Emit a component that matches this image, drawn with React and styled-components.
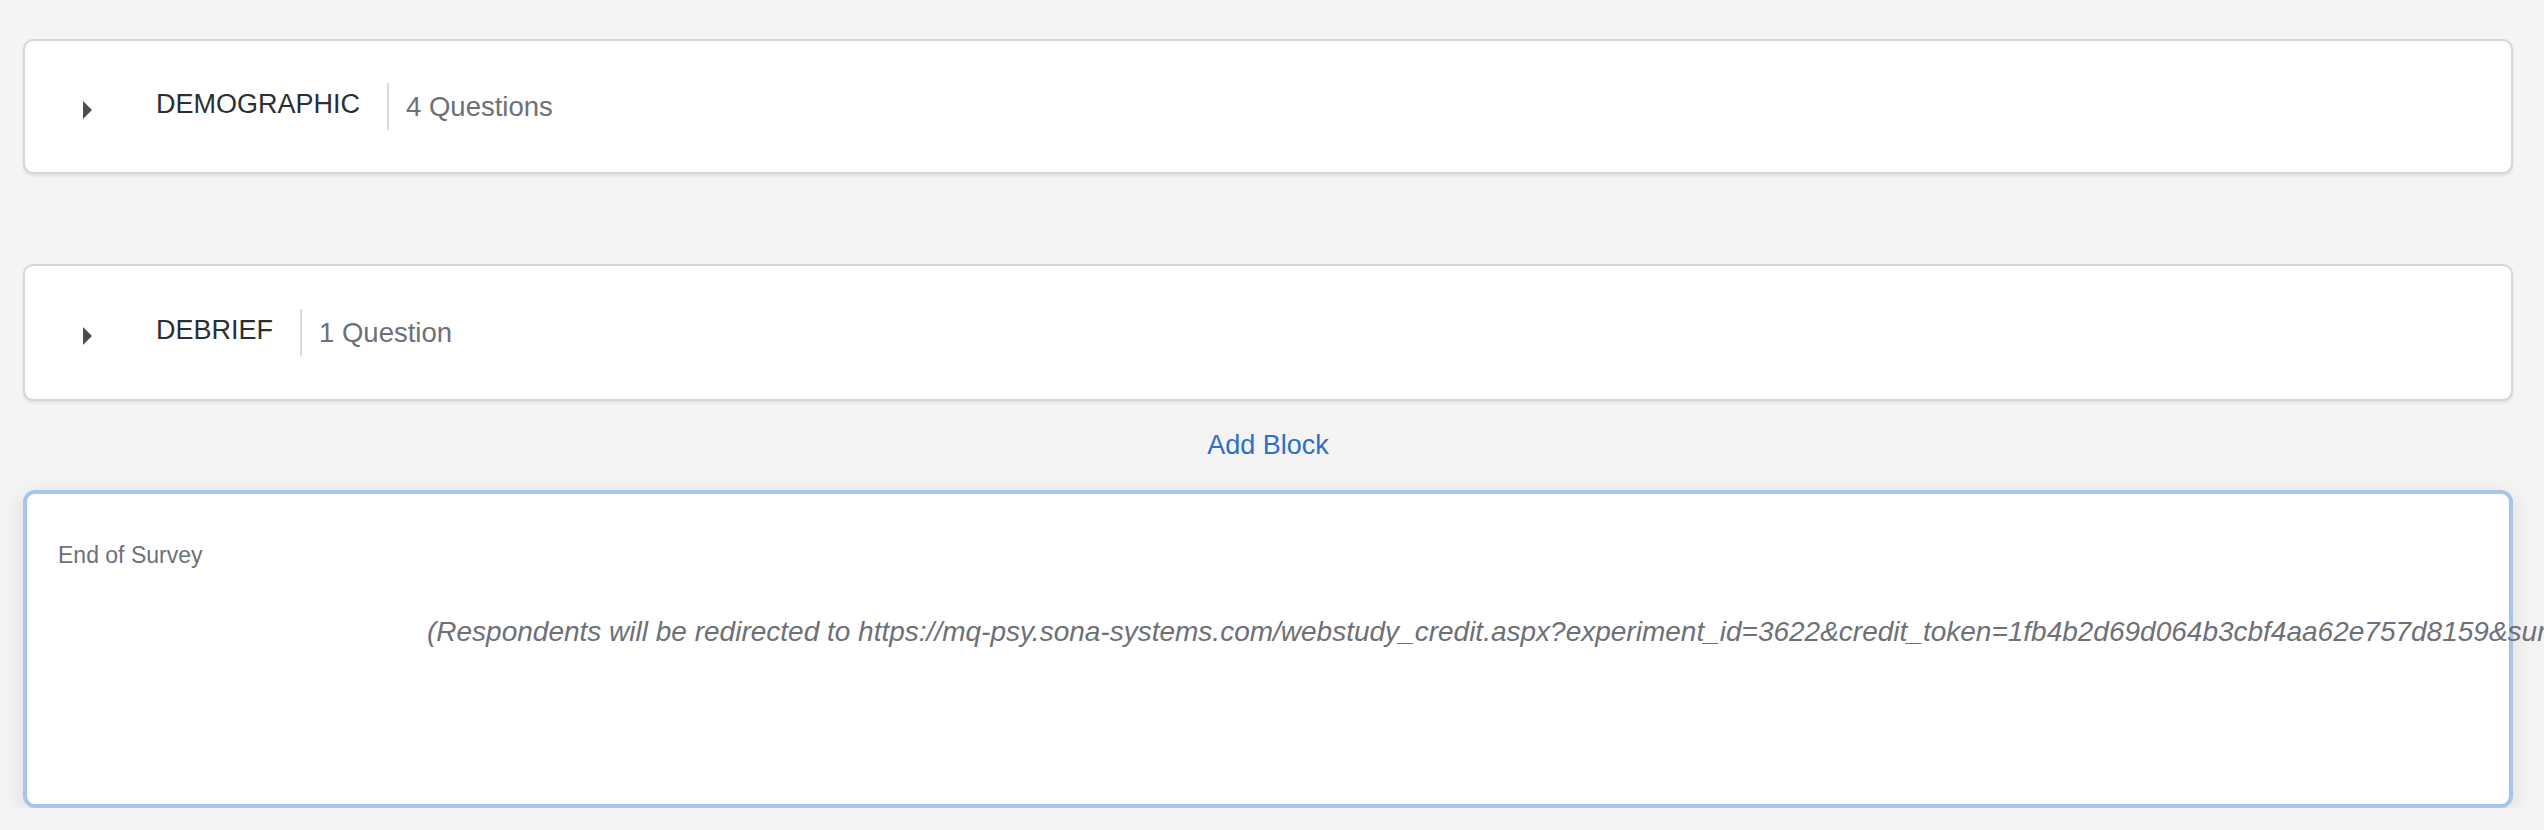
import React from 'react';
import styled, { createGlobalStyle } from 'styled-components';

const GlobalStyle = createGlobalStyle`
  html, body {
    margin: 0;
    padding: 0;
    background: #f4f4f4;
    overflow-x: hidden;
  }
  body {
    font-family: 'Liberation Sans', Arial, sans-serif;
  }
`;

const Page = styled.div`
  display: flex;
  flex-direction: column;
  padding: 39px 31px 0 23px;
`;

const BlockCard = styled.div`
  box-sizing: border-box;
  height: ${props => props.tall ? 137 : 135}px;
  margin-top: ${props => props.gap || 0}px;
  background: #fff;
  border: 2px solid #d6d6d6;
  border-radius: 10px;
  box-shadow: 0 2px 3px rgba(0, 0, 0, 0.08);
  display: flex;
  align-items: center;
  padding-left: 58px;
`;

const Caret = styled.span`
  width: 0;
  height: 0;
  border-top: 9.5px solid transparent;
  border-bottom: 9.5px solid transparent;
  border-left: 9px solid #4b4e53;
  margin-top: 6px;
  margin-right: 64px;
`;

const BlockName = styled.span`
  font-size: 27px;
  color: #2b2e33;
  padding-right: 27px;
  margin-top: -4px;
`;

const Divider = styled.span`
  width: 2px;
  height: 47px;
  background: #dadada;
`;

const QuestionCount = styled.span`
  font-size: 27.5px;
  color: #6d7076;
  padding-left: 17px;
`;

const AddRow = styled.div`
  height: 89px;
  display: flex;
  align-items: center;
  justify-content: center;
`;

const AddLink = styled.a`
  font-size: 27px;
  color: #2d6ec6;
  cursor: pointer;
`;

const EndBox = styled.div`
  box-sizing: border-box;
  height: 318px;
  background: #fff;
  border: 4px solid #a5c5ea;
  border-radius: 12px;
  box-shadow: 0 6px 24px rgba(0, 0, 0, 0.1);
  padding: 47px 0 0 31px;
`;

const EndLabel = styled.div`
  font-size: 23px;
  line-height: 28px;
  color: #6d7076;
`;

const Redirect = styled.div`
  margin: 47px 0 0 369px;
  font-size: 28px;
  line-height: 32px;
  font-style: italic;
  color: #6d7076;
  white-space: nowrap;
`;

const blocks = [
  { name: 'DEMOGRAPHIC', count: '4 Questions' },
  { name: 'DEBRIEF', count: '1 Question' },
];

const App = () => {
  return (
    <>
      <GlobalStyle />
      <Page>
        {blocks.map((b, i) => (
          <BlockCard key={b.name} gap={i === 0 ? 0 : 90} tall={i === 1}>
            <Caret />
            <BlockName>{b.name}</BlockName>
            <Divider />
            <QuestionCount>{b.count}</QuestionCount>
          </BlockCard>
        ))}
        <AddRow>
          <AddLink>Add Block</AddLink>
        </AddRow>
        <EndBox>
          <EndLabel>End of Survey</EndLabel>
          <Redirect>
            (Respondents will be redirected to https://mq-psy.sona-systems.com/webstudy_credit.aspx?experiment_id=3622&amp;credit_token=1fb4b2d69d064b3cbf4aa62e757d8159&amp;survey_code=XXXX)
          </Redirect>
        </EndBox>
      </Page>
    </>
  );
};

export default App;
